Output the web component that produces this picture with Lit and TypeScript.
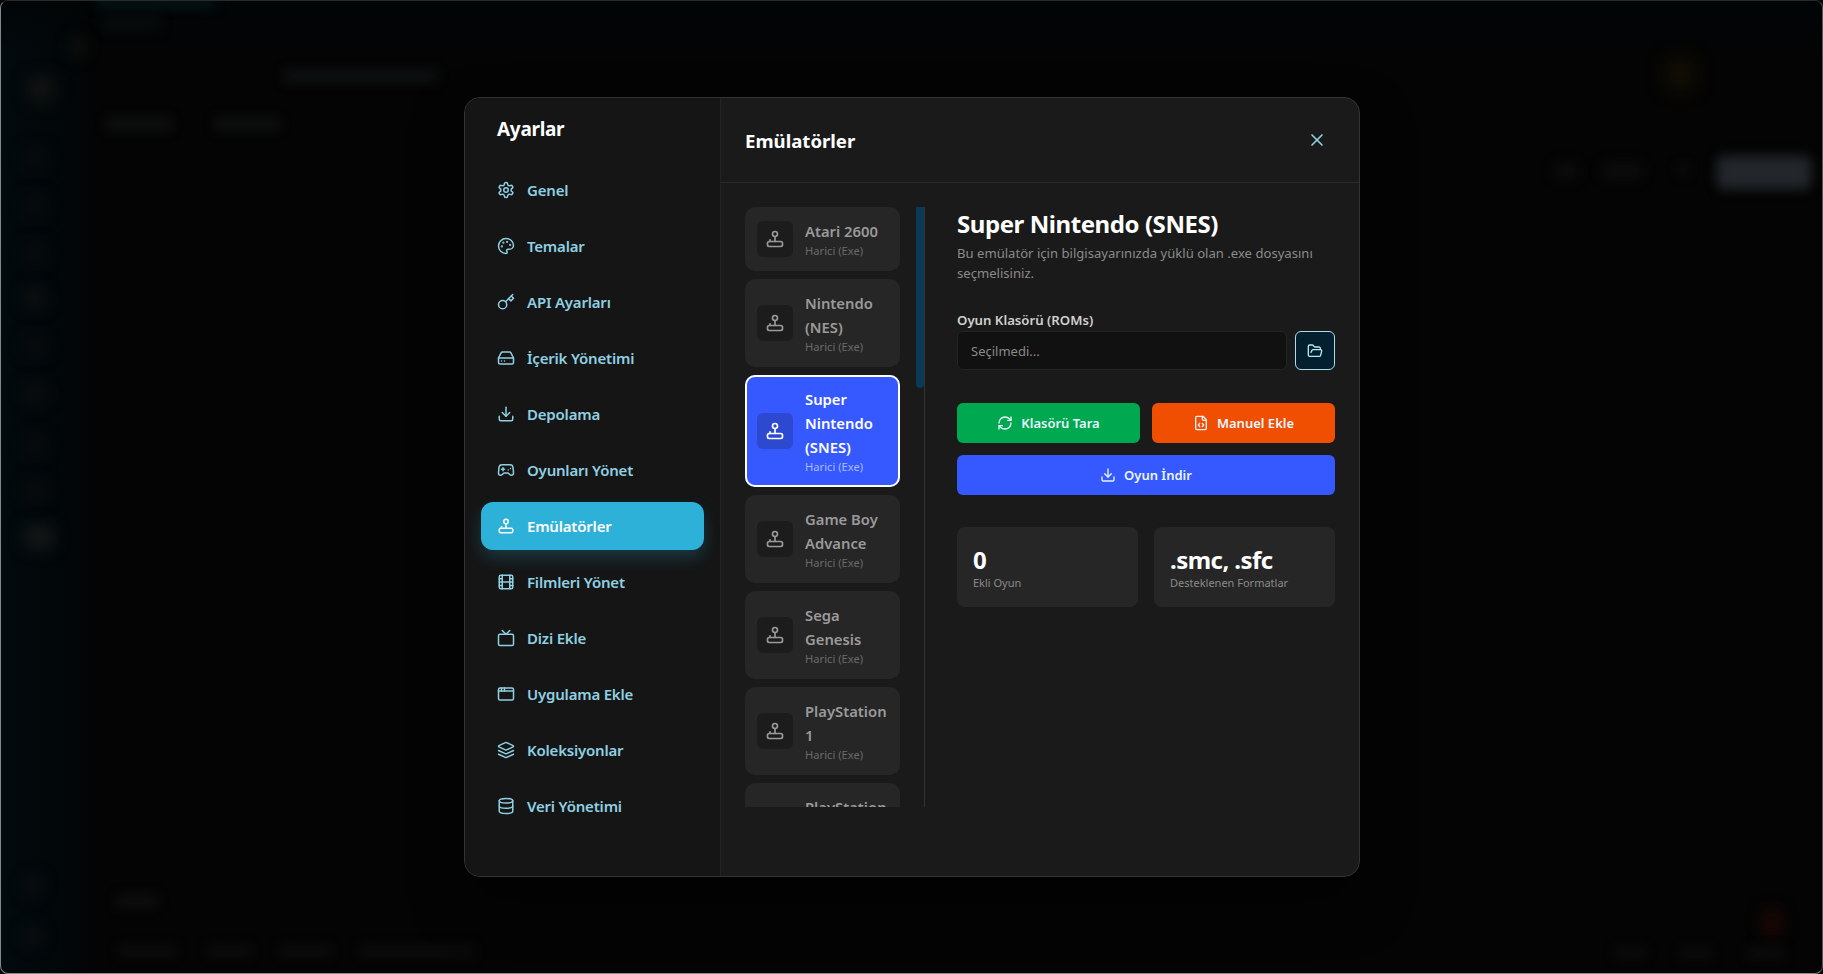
import { LitElement, html, css, svg } from "lit";
import { customElement } from "lit/decorators.js";

const ic = {
  settings: svg`<path d="M12.22 2h-.44a2 2 0 0 0-2 2v.18a2 2 0 0 1-1 1.73l-.43.25a2 2 0 0 1-2 0l-.15-.08a2 2 0 0 0-2.73.73l-.22.38a2 2 0 0 0 .73 2.73l.15.1a2 2 0 0 1 1 1.72v.51a2 2 0 0 1-1 1.74l-.15.09a2 2 0 0 0-.73 2.73l.22.38a2 2 0 0 0 2.73.73l.15-.08a2 2 0 0 1 2 0l.43.25a2 2 0 0 1 1 1.73V20a2 2 0 0 0 2 2h.44a2 2 0 0 0 2-2v-.18a2 2 0 0 1 1-1.73l.43-.25a2 2 0 0 1 2 0l.15.08a2 2 0 0 0 2.73-.73l.22-.39a2 2 0 0 0-.73-2.73l-.15-.08a2 2 0 0 1-1-1.74v-.5a2 2 0 0 1 1-1.74l.15-.09a2 2 0 0 0 .73-2.73l-.22-.38a2 2 0 0 0-2.73-.73l-.15.08a2 2 0 0 1-2 0l-.43-.25a2 2 0 0 1-1-1.73V4a2 2 0 0 0-2-2z"/><circle cx="12" cy="12" r="3"/>`,
  palette: svg`<circle cx="13.5" cy="6.5" r=".5" fill="currentColor"/><circle cx="17.5" cy="10.5" r=".5" fill="currentColor"/><circle cx="8.5" cy="7.5" r=".5" fill="currentColor"/><circle cx="6.5" cy="12.5" r=".5" fill="currentColor"/><path d="M12 2C6.5 2 2 6.5 2 12s4.5 10 10 10c.926 0 1.648-.746 1.648-1.688 0-.437-.18-.835-.437-1.125-.29-.289-.438-.652-.438-1.125a1.64 1.64 0 0 1 1.668-1.668h1.996c3.051 0 5.555-2.503 5.555-5.554C21.965 6.012 17.461 2 12 2z"/>`,
  key: svg`<circle cx="7.5" cy="15.5" r="5.5"/><path d="m21 2-9.6 9.6"/><path d="m15.5 7.5 3 3L22 7l-3-3"/>`,
  drive: svg`<line x1="22" x2="2" y1="12" y2="12"/><path d="M5.45 5.11 2 12v6a2 2 0 0 0 2 2h16a2 2 0 0 0 2-2v-6l-3.45-6.89A2 2 0 0 0 16.76 4H7.24a2 2 0 0 0-1.79 1.11z"/><line x1="6" x2="6.01" y1="16" y2="16"/><line x1="10" x2="10.01" y1="16" y2="16"/>`,
  download: svg`<path d="M21 15v4a2 2 0 0 1-2 2H5a2 2 0 0 1-2-2v-4"/><polyline points="7 10 12 15 17 10"/><line x1="12" x2="12" y1="15" y2="3"/>`,
  gamepad: svg`<line x1="6" x2="10" y1="11" y2="11"/><line x1="8" x2="8" y1="9" y2="13"/><line x1="15" x2="15.01" y1="12" y2="12"/><line x1="18" x2="18.01" y1="10" y2="10"/><path d="M17.32 5H6.68a4 4 0 0 0-3.978 3.59c-.006.052-.01.101-.017.152C2.604 9.416 2 14.456 2 16a3 3 0 0 0 3 3c1 0 1.5-.5 2-1l1.414-1.414A2 2 0 0 1 9.828 16h4.344a2 2 0 0 1 1.414.586L17 18c.5.5 1 1 2 1a3 3 0 0 0 3-3c0-1.545-.604-6.584-.685-7.258-.007-.05-.011-.1-.017-.151A4 4 0 0 0 17.32 5z"/>`,
  joystick: svg`<path d="M21 17a2 2 0 0 0-2-2H5a2 2 0 0 0-2 2v2a2 2 0 0 0 2 2h14a2 2 0 0 0 2-2Z"/><path d="M6 15v-2"/><path d="M12 15V9"/><circle cx="12" cy="6" r="3"/>`,
  film: svg`<rect width="18" height="18" x="3" y="3" rx="2"/><path d="M7 3v18"/><path d="M3 7.5h4"/><path d="M3 12h18"/><path d="M3 16.5h4"/><path d="M17 3v18"/><path d="M17 7.5h4"/><path d="M17 16.5h4"/>`,
  tv: svg`<rect width="20" height="15" x="2" y="7" rx="2"/><polyline points="17 2 12 7 7 2"/>`,
  app: svg`<rect x="2" y="4" width="20" height="16" rx="2"/><path d="M10 4v4"/><path d="M2 8h20"/><path d="M6 4v4"/>`,
  layers: svg`<path d="m12.83 2.18a2 2 0 0 0-1.66 0L2.6 6.08a1 1 0 0 0 0 1.83l8.58 3.91a2 2 0 0 0 1.66 0l8.58-3.9a1 1 0 0 0 0-1.83Z"/><path d="m22 17.65-9.17 4.16a2 2 0 0 1-1.66 0L2 17.65"/><path d="m22 12.65-9.17 4.16a2 2 0 0 1-1.66 0L2 12.65"/>`,
  database: svg`<ellipse cx="12" cy="5" rx="9" ry="3"/><path d="M3 5V19A9 3 0 0 0 21 19V5"/><path d="M3 12A9 3 0 0 0 21 12"/>`,
  x: svg`<path d="M18 6 6 18"/><path d="m6 6 12 12"/>`,
  folder: svg`<path d="m6 14 1.45-2.9A2 2 0 0 1 9.24 10H20a2 2 0 0 1 1.94 2.5l-1.55 6a2 2 0 0 1-1.94 1.5H4a2 2 0 0 1-2-2V5c0-1.1.9-2 2-2h3.93a2 2 0 0 1 1.66.9l.82 1.2a2 2 0 0 0 1.66.9H18a2 2 0 0 1 2 2v2"/>`,
  refresh: svg`<path d="M3 12a9 9 0 0 1 9-9 9.75 9.75 0 0 1 6.74 2.74L21 8"/><path d="M21 3v5h-5"/><path d="M21 12a9 9 0 0 1-9 9 9.75 9.75 0 0 1-6.74-2.74L3 16"/><path d="M8 16H3v5"/>`,
  filecode: svg`<path d="M10 12.5 8 15l2 2.5"/><path d="m14 12.5 2 2.5-2 2.5"/><path d="M14 2v4a2 2 0 0 0 2 2h4"/><path d="M15 2H6a2 2 0 0 0-2 2v16a2 2 0 0 0 2 2h12a2 2 0 0 0 2-2V7z"/>`,
};
const icon = (n: keyof typeof ic, size: number) => html`<svg class="ico" width=${size} height=${size} viewBox="0 0 24 24" fill="none" stroke="currentColor" stroke-width="2" stroke-linecap="round" stroke-linejoin="round">${ic[n]}</svg>`;

const nav: [keyof typeof ic, string][] = [
  ["settings", "Genel"], ["palette", "Temalar"], ["key", "API Ayarları"], ["drive", "İçerik Yönetimi"],
  ["download", "Depolama"], ["gamepad", "Oyunları Yönet"], ["joystick", "Emülatörler"], ["film", "Filmleri Yönet"],
  ["tv", "Dizi Ekle"], ["app", "Uygulama Ekle"], ["layers", "Koleksiyonlar"], ["database", "Veri Yönetimi"],
];
const systems = ["Atari 2600", "Nintendo (NES)", "Super Nintendo (SNES)", "Game Boy Advance", "Sega Genesis", "PlayStation 1", "PlayStation 2"];

// Blurred shapes of the app behind the dialog: [x, y, w, h, colour, blur]
const blobs: [number, number, number, number, string, number][] = [
  [95, -4, 120, 12, "#051315", 5], [100, 15, 60, 14, "#090c0c", 6], [68, 36, 18, 20, "#0c0f0b", 7], [27, 75, 26, 26, "#121412", 8],
  [282, 67, 156, 16, "#0c0f0f", 5], [104, 115, 68, 16, "#0b0e0c", 5], [212, 115, 68, 16, "#0b0e0c", 5],
  [24, 147, 20, 20, "#090c0d", 8], [24, 195, 20, 20, "#090c0d", 8], [24, 243, 20, 20, "#090c0d", 8],
  [24, 287, 20, 20, "#0e1111", 8], [24, 335, 20, 20, "#090c0e", 8], [24, 382, 20, 20, "#0c0e0f", 8],
  [24, 435, 20, 20, "#090c0e", 8], [24, 480, 20, 20, "#0b0c0e", 8], [24, 524, 28, 24, "#141816", 8],
  [22, 875, 20, 20, "#090d10", 7], [22, 925, 20, 20, "#090d10", 7],
  [114, 892, 44, 16, "#0c0c0c", 5], [116, 943, 60, 14, "#0b0b0b", 5], [206, 943, 46, 14, "#0b0b0b", 5],
  [278, 943, 54, 14, "#0b0b0b", 5], [358, 943, 118, 14, "#0b0b0b", 5],
  [1664, 58, 30, 30, "#140f04", 9], [1552, 162, 26, 16, "#0c0c0c", 6], [1600, 162, 42, 16, "#0c0c0c", 6],
  [1675, 162, 14, 14, "#0a0a0a", 5], [1716, 155, 94, 33, "#23272c", 6],
  [1760, 908, 22, 28, "#190705", 7], [1612, 945, 34, 14, "#0a0a0a", 5], [1678, 945, 34, 14, "#0a0a0a", 5], [1745, 945, 40, 14, "#0a0a0a", 5],
];

@customElement("app-root")
export class AppRoot extends LitElement {
  static styles = css`
    :host { display: block; width: 1823px; height: 974px; position: relative; overflow: hidden; background: #040404; font-family: "Noto Sans", sans-serif; }
    .window { position: absolute; inset: 0; overflow: hidden; border-radius: 8px; border: 1px solid #2a2a2a; border-right-color: #555; border-bottom-color: #8a8a8a; border-left-color: #80888c; background: linear-gradient(90deg, #020a0d 0, #020608 70px, #040404 90px, #040404 100%); box-sizing: border-box; }
    .top { position: absolute; left: 0; right: 0; top: 0; height: 50px; background: linear-gradient(180deg, #010506, transparent); }
    .blob { position: absolute; border-radius: 6px; }
    .stage { position: absolute; inset: 0; display: flex; justify-content: center; align-items: center; }
    .modal { width: 896px; height: 780px; margin-left: 1px; display: flex; box-sizing: border-box; border: 1px solid #333; border-radius: 16px; overflow: hidden; background: #1a1a1a; box-shadow: 0 25px 50px rgba(0,0,0,.5); }
    .side { width: 256px; flex: none; box-sizing: border-box; background: #151515; border-right: 1px solid #222; padding: 17px 16px 0; display: flex; flex-direction: column; }
    .side h2 { margin: 0 0 23px; padding: 0 16px; font-size: 19px; line-height: 28px; font-weight: 700; letter-spacing: -.3px; color: #fff; }
    .nav { display: flex; flex-direction: column; gap: 8px; }
    .nav-item { height: 48px; flex: none; display: flex; align-items: center; gap: 12px; padding: 0 16px; border-radius: 12px; color: #8fd0e2; font-size: 15px; font-weight: 600; letter-spacing: -.2px; }
    .nav-item.on { background: #2eb1d9; color: #fff; box-shadow: 0 8px 16px rgba(46,177,217,.22); }
    .ico { flex: none; display: block; }
    .main { flex: 1; min-width: 0; display: flex; flex-direction: column; }
    .head { height: 85px; flex: none; box-sizing: border-box; padding: 0 24px; border-bottom: 1px solid #2a2a2a; display: flex; align-items: center; justify-content: space-between; }
    .head h3 { margin: 2px 0 0; font-size: 18.6px; line-height: 28px; font-weight: 700; color: #fff; }
    .close { color: #8fd0e2; display: flex; margin-right: 8px; }
    .body { display: flex; padding: 24px 24px 0; }
    .list-wrap { width: 180px; flex: none; height: 600px; box-sizing: border-box; border-right: 1px solid #333; position: relative; }
    .list { height: 600px; overflow: hidden; display: flex; flex-direction: column; gap: 8px; width: 155px; }
    .thumb { position: absolute; right: 0; top: 0; width: 8px; height: 181px; border-radius: 0 0 4px 4px; background: #0a3a55; }
    .sys { flex: none; display: flex; align-items: center; gap: 12px; padding: 12px; box-sizing: border-box; border-radius: 10px; background: #262626; color: #9a9a9a; }
    .sys.on { background: #3558ff; color: #fff; box-shadow: inset 0 0 0 2px #fff; }
    .sys-ic { width: 36px; height: 36px; flex: none; display: flex; align-items: center; justify-content: center; border-radius: 6px; background: #1c1c1c; color: #9a9a9a; }
    .sys.on .sys-ic { background: #2c49d0; color: #fff; }
    .sys-name { font-size: 14.8px; line-height: 24px; font-weight: 600; }
    .sys-sub { font-size: 11.2px; line-height: 16px; color: #6a6a6a; }
    .sys.on .sys-sub { color: #a9bcff; }
    .detail { flex: 1; min-width: 0; padding-left: 32px; }
    .detail h1 { margin: 0; padding-top: 1px; font-size: 24px; line-height: 32px; font-weight: 700; letter-spacing: -.43px; color: #fff; }
    .desc { margin: 3px 0 0; font-size: 13.1px; line-height: 20px; color: #8a8a8a; }
    .label { margin-top: 27px; margin-bottom: 1px; font-size: 13.2px; line-height: 20px; font-weight: 600; color: #d0d0d0; }
    .field { display: flex; gap: 8px; }
    .input { flex: 1; height: 39px; box-sizing: border-box; display: flex; align-items: center; padding: 0 13px; border: 1px solid #242424; border-radius: 6px; background: #111; color: #8a8a8a; font-size: 13px; }
    .browse { width: 40px; height: 39px; box-sizing: border-box; flex: none; display: flex; align-items: center; justify-content: center; border: 1px solid #a5e0ef; border-radius: 6px; background: #04202e; color: #b5e8f5; }
    .actions { margin-top: 33px; display: grid; grid-template-columns: 1fr 1fr; gap: 12px; }
    .btn { height: 40px; display: flex; align-items: center; justify-content: center; gap: 8px; border-radius: 6px; font-size: 13px; font-weight: 600; color: #e8f6ff; }
    .green { background: #00a84f; }
    .orange { background: #f04e00; }
    .blue { background: #3558ff; grid-column: 1 / span 2; }
    .stats { margin-top: 32px; display: grid; grid-template-columns: 1fr 1fr; gap: 16px; }
    .stat { height: 80px; box-sizing: border-box; padding: 18px 16px 0; border-radius: 8px; background: #262626; }
    .stat b { display: block; font-size: 24px; line-height: 30px; font-weight: 700; letter-spacing: -.55px; color: #fff; }
    .stat span { display: block; font-size: 11px; line-height: 16px; color: #8a8a8a; }
  `;

  render() {
    return html`
      <div class="window">
        <div class="top"></div>
        ${blobs.map(([x, y, w, h, c, b]) => html`<div class="blob" style="left:${x}px;top:${y}px;width:${w}px;height:${h}px;background:${c};filter:blur(${b}px)"></div>`)}
      </div>
      <div class="stage">
        <div class="modal">
          <aside class="side">
            <h2>Ayarlar</h2>
            <div class="nav">
              ${nav.map(([i, t]) => html`<div class="nav-item ${t === "Emülatörler" ? "on" : ""}">${icon(i, 18)}<span>${t}</span></div>`)}
            </div>
          </aside>
          <section class="main">
            <header class="head"><h3>Emülatörler</h3><span class="close">${icon("x", 20)}</span></header>
            <div class="body">
              <div class="list-wrap">
                <div class="list">
                  ${systems.map((s, i) => html`<div class="sys ${i === 2 ? "on" : ""}">
                    <div class="sys-ic">${icon("joystick", 20)}</div>
                    <div><div class="sys-name">${s}</div><div class="sys-sub">Harici (Exe)</div></div>
                  </div>`)}
                </div>
                <div class="thumb"></div>
              </div>
              <div class="detail">
                <h1>Super Nintendo (SNES)</h1>
                <p class="desc">Bu emülatör için bilgisayarınızda yüklü olan .exe dosyasını seçmelisiniz.</p>
                <div class="label">Oyun Klasörü (ROMs)</div>
                <div class="field"><div class="input">Seçilmedi...</div><div class="browse">${icon("folder", 16)}</div></div>
                <div class="actions">
                  <div class="btn green">${icon("refresh", 16)}<span>Klasörü Tara</span></div>
                  <div class="btn orange">${icon("filecode", 16)}<span>Manuel Ekle</span></div>
                  <div class="btn blue">${icon("download", 16)}<span>Oyun İndir</span></div>
                </div>
                <div class="stats">
                  <div class="stat"><b>0</b><span>Ekli Oyun</span></div>
                  <div class="stat"><b>.smc, .sfc</b><span>Desteklenen Formatlar</span></div>
                </div>
              </div>
            </div>
          </section>
        </div>
      </div>
    `;
  }
}
